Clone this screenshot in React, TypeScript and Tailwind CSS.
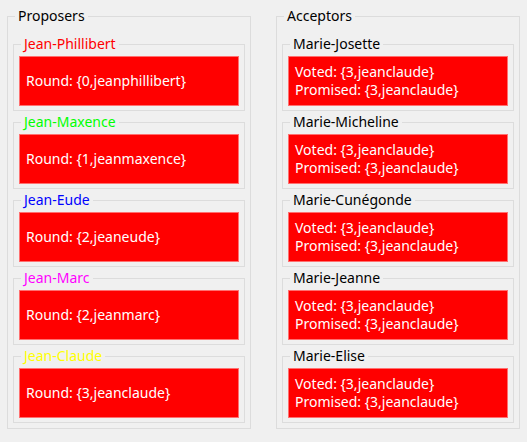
import type { ReactNode } from 'react'

const proposers = [
  { name: 'Jean-Phillibert', color: 'text-[#ff0000]', round: '{0,jeanphillibert}' },
  { name: 'Jean-Maxence', color: 'text-[#00ff00]', round: '{1,jeanmaxence}' },
  { name: 'Jean-Eude', color: 'text-[#0000ff]', round: '{2,jeaneude}' },
  { name: 'Jean-Marc', color: 'text-[#ff00ff]', round: '{2,jeanmarc}' },
  { name: 'Jean-Claude', color: 'text-[#ffff00]', round: '{3,jeanclaude}' },
]

const acceptors = ['Marie-Josette', 'Marie-Micheline', 'Marie-Cunégonde', 'Marie-Jeanne', 'Marie-Elise']

function Group({ title, color, children }: { title: string; color?: string; children: ReactNode }) {
  return (
    <fieldset className="min-w-0 border border-[#dcdcdc] px-[5px] pt-[4px] pb-[4px]">
      <legend className={`ml-[2px] px-[3px] leading-[16px] ${color ?? 'text-black'}`}>{title}</legend>
      <div className="flex h-[50px] flex-col justify-center border border-[#ff7070] bg-[#ff0000] px-[6px] leading-[18px] text-white">
        {children}
      </div>
    </fieldset>
  )
}

function Column({ title, children }: { title: string; children: ReactNode }) {
  return (
    <fieldset className="min-w-0 border border-[#dcdcdc] px-[5px] pt-[12px] pb-[5px]">
      <legend className="ml-[2px] px-[3px] leading-[16px] text-black">{title}</legend>
      <div className="flex flex-col gap-[3px]">{children}</div>
    </fieldset>
  )
}

export default function App() {
  return (
    <div
      className="grid h-[442px] w-[527px] grid-cols-[244px_244px] gap-[25px] bg-[#f0f0f0] px-[7px] pt-[8px] text-[14px]"
      style={{ fontFamily: '"Noto Sans", "Open Sans", sans-serif' }}
    >
      <div>
        <Column title="Proposers">
          {proposers.map((p) => (
            <Group key={p.name} title={p.name} color={p.color}>
              <span>Round: {p.round}</span>
            </Group>
          ))}
        </Column>
      </div>
      <div>
        <Column title="Acceptors">
          {acceptors.map((name) => (
            <Group key={name} title={name}>
              <span>Voted: {'{3,jeanclaude}'}</span>
              <span>Promised: {'{3,jeanclaude}'}</span>
            </Group>
          ))}
        </Column>
      </div>
    </div>
  )
}
